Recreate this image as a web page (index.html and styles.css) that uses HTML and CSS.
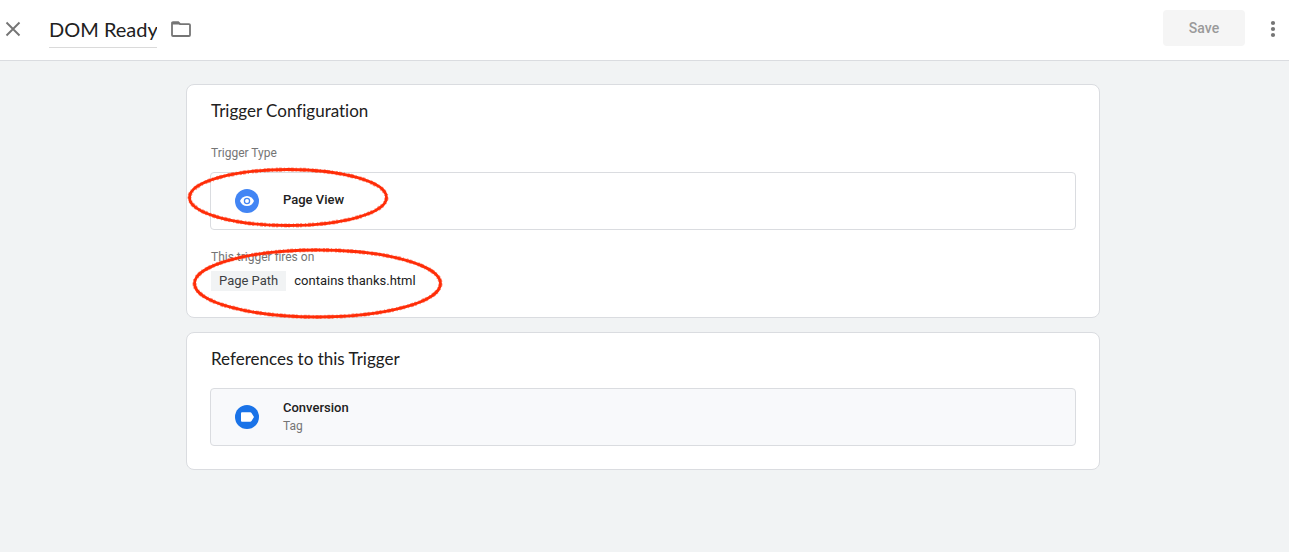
FILE: index.html
```html
<!DOCTYPE html>
<html lang="en">
<head>
<meta charset="utf-8">
<meta name="viewport" content="width=device-width, initial-scale=1">
<title>DOM Ready</title>
<link rel="stylesheet" href="styles.css">
</head>
<body>
<header class="topbar">
  <button class="icon-button close" type="button" aria-label="Close">
    <svg width="16" height="16" viewBox="0 0 16 16"><path d="M1.5 1.5 14.5 14.5M14.5 1.5 1.5 14.5" fill="none" stroke="#757575" stroke-width="1.9"/></svg>
  </button>
  <input class="name" type="text" value="DOM Ready" aria-label="Trigger name">
  <button class="icon-button" type="button" aria-label="Folder">
    <svg width="22" height="18" viewBox="0 0 22 18"><path d="M3 2.1h5.2l2 2H19a1 1 0 0 1 1 1V15a1 1 0 0 1-1 1H3a1 1 0 0 1-1-1V3.100a1 1 0 0 1 1-1z" fill="none" stroke="#757575" stroke-width="1.8"/><path d="M2 2h6.500l2 2.500H2z" fill="#757575"/></svg>
  </button>
  <button class="save" type="button" disabled>Save</button>
  <button class="icon-button more" type="button" aria-label="More actions">
    <svg width="6" height="18" viewBox="0 0 6 18"><g fill="#757575"><circle cx="3" cy="3" r="2.100"/><circle cx="3" cy="9" r="2.100"/><circle cx="3" cy="15" r="2.100"/></g></svg>
  </button>
</header>
<main class="content">
  <section class="card">
    <h2 class="card-title">Trigger Configuration</h2>
    <h3 class="label type-label">Trigger Type</h3>
    <button class="item" type="button">
      <svg class="badge" width="24" height="24" viewBox="0 0 24 24"><circle cx="12" cy="12" r="12" fill="#4285f4"/><path d="M12 6.900c-3.200 0-5.900 2.100-7 5.100 1.100 3 3.800 5.100 7 5.100s5.900-2.100 7-5.100c-1.100-3-3.800-5.100-7-5.100z" fill="#fff"/><circle cx="12" cy="12" r="2.600" fill="#fff" stroke="#4285f4" stroke-width="1.300"/></svg>
      <span class="item-name">Page View</span>
    </button>
    <h3 class="label fires-label">This trigger fires on</h3>
    <p class="condition"><span class="chip">Page Path</span><span>contains thanks.html</span></p>
    <svg class="marks" width="264" height="160" viewBox="0 0 264 160" aria-hidden="true">
      <g fill="none" stroke="#ff2d08" stroke-width="2.800">
        <ellipse cx="104" cy="35.500" rx="98.500" ry="28"/>
        <ellipse cx="133.500" cy="121.500" rx="123" ry="33.500"/>
      </g>
      <g fill="none" stroke="#ff2d08" stroke-width="4.200" stroke-dasharray="3 2 1 3 2 1" opacity="0.5">
        <ellipse cx="104" cy="35.500" rx="98.500" ry="28"/>
        <ellipse cx="133.500" cy="121.500" rx="123" ry="33.500"/>
      </g>
    </svg>
  </section>
  <section class="card">
    <h2 class="card-title">References to this Trigger</h2>
    <a class="item reference" href="#">
      <svg class="badge" width="24" height="24" viewBox="0 0 24 24"><circle cx="12" cy="12" r="12" fill="#1a73e8"/><path d="M7 7.200h8.200q.8 0 1.300.7l2.500 4.100-2.500 4.100q-.5.700-1.300.7H7q-1 0-1-1V8.200q0-1 1-1z" fill="#fff"/></svg>
      <span class="item-text"><span class="item-name">Conversion</span><span class="item-kind">Tag</span></span>
    </a>
  </section>
</main>
</body>
</html>
```
FILE: styles.css
```css
* { box-sizing: border-box; }
body {
  margin: 0;
  min-height: 100vh;
  background: #f1f3f4;
  color: #212121;
  font: 13px/20px Roboto, sans-serif;
}
h2, h3, p { margin: 0; font-weight: 400; }
button { font: inherit; color: inherit; cursor: pointer; }
svg { display: block; flex: none; }

.topbar {
  display: flex;
  align-items: center;
  padding: 10px 13px 12px 5px;
  background: #fff;
  border-bottom: 1px solid #dadce0;
}
.icon-button { padding: 0; border: 0; background: none; }
.name {
  width: 108px;
  height: 38px;
  margin: 0 13px 0 28px;
  padding: 0;
  border: 0;
  border-bottom: 1px solid #dadada;
  outline: 0;
  background: none;
  color: #212121;
  font: 20px/28px Lato, sans-serif;
}
.save {
  align-self: flex-start;
  width: 82px;
  height: 36px;
  margin: 0 25px 0 auto;
  border: 0;
  border-radius: 4px;
  background: #f5f5f5;
  color: #9a9a9a;
  font-size: 14px;
  font-weight: 500;
}

.content {
  display: grid;
  gap: 14px;
  max-width: 917px;
  margin: 0 auto;
  padding: 23px 3px 24px 0;
}
.card {
  position: relative;
  padding: 14px 23px 23px;
  background: #fff;
  border: 1px solid #dadce0;
  border-radius: 8px;
}
.card-title {
  padding-left: 1px;
  font: 17px/24px Lato, sans-serif;
  font-variant-ligatures: none;
}
.label { padding-left: 1px; color: #757575; font-size: 12px; line-height: 16px; }
.type-label { margin: 22px 0 11px; }
.fires-label { margin: 19px 0 6px; }

.item {
  display: flex;
  align-items: center;
  gap: 24px;
  width: 100%;
  height: 58px;
  padding: 0 24px;
  border: 1px solid #dadce0;
  border-radius: 4px;
  background: #fff;
  color: inherit;
  text-align: left;
  text-decoration: none;
}
.reference { margin-top: 17px; background: #f8f9fb; }
.item-text { display: grid; }
.item-name { padding-bottom: 2px; font-size: 13px; line-height: 16px; font-weight: 500; }
.item-kind { padding-bottom: 1px; color: #757575; font-size: 12px; line-height: 16px; }

.condition { display: flex; gap: 8px; padding: 0 0 3px 1px; }
.chip { padding: 0 8px; background: #f1f3f4; color: #3c4043; }

.marks { position: absolute; left: -3px; top: 77px; pointer-events: none; }
```
